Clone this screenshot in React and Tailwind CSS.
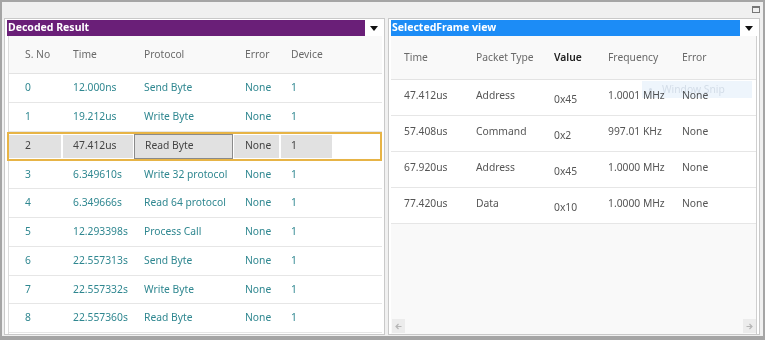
import React from 'react';

const decoded = [
  { no: '0', time: '12.000ns', protocol: 'Send Byte' },
  { no: '1', time: '19.212us', protocol: 'Write Byte' },
  { no: '2', time: '47.412us', protocol: 'Read Byte', selected: true },
  { no: '3', time: '6.349610s', protocol: 'Write 32 protocol' },
  { no: '4', time: '6.349666s', protocol: 'Read 64 protocol' },
  { no: '5', time: '12.293398s', protocol: 'Process Call' },
  { no: '6', time: '22.557313s', protocol: 'Send Byte' },
  { no: '7', time: '22.557332s', protocol: 'Write Byte' },
  { no: '8', time: '22.557360s', protocol: 'Read Byte' },
];

const frames = [
  { time: '47.412us', type: 'Address', value: '0x45', freq: '1.0001 MHz' },
  { time: '57.408us', type: 'Command', value: '0x2', freq: '997.01 KHz' },
  { time: '67.920us', type: 'Address', value: '0x45', freq: '1.0000 MHz' },
  { time: '77.420us', type: 'Data', value: '0x10', freq: '1.0000 MHz' },
];

function Caret() {
  return (
    <svg width="8" height="5" viewBox="0 0 8 5">
      <path d="M0 0h8L4 5z" fill="#111" />
    </svg>
  );
}

function ArrowBtn({ dir }) {
  return (
    <div className="flex h-[14px] w-[13px] items-center justify-center bg-[#ececec]">
      <svg width="7" height="7" viewBox="0 0 7 7">
        {dir === 'left' ? (
          <path d="M6.5 3.5H1M3.5 1L1 3.5 3.5 6" stroke="#b5b5b5" strokeWidth="1.2" fill="none" />
        ) : (
          <path d="M0.5 3.5H6M3.5 1L6 3.5 3.5 6" stroke="#b5b5b5" strokeWidth="1.2" fill="none" />
        )}
      </svg>
    </div>
  );
}

function PanelHeader({ title, color }) {
  return (
    <div className="flex h-[16px] items-center">
      <div className={`flex h-full flex-1 items-center pl-[1px] text-[10.5px] font-bold text-white ${color}`}>{title}</div>
      <div className="flex w-[17px] justify-center"><Caret /></div>
    </div>
  );
}

export default function App() {
  return (
    <div className="relative flex h-[340px] w-[765px] flex-col border-2 border-b-[4px] border-[#a5a5a5] bg-[#f0f0f0] text-[10.3px]" style={{ fontFamily: '"Noto Sans", "Open Sans", sans-serif' }}>
      <div className="flex h-[16px] justify-end pr-[3px] pt-[4px]">
        <div className="h-[7px] w-[8px] border border-t-2 border-[#777]" />
      </div>

      <div className="flex flex-1 gap-[3px] pb-[1px] pl-[2px] pr-[3px]">
        {/* Decoded result */}
        <div className="flex w-[381px] flex-col border border-[#c9c9c9] bg-white px-[2px] pt-[1px]">
          <PanelHeader title="Decoded Result" color="bg-[#6a1f78]" />
          <div className="ml-[1px] flex-1 border-l border-[#dcdcdc]">
            <div className="flex h-[38px] items-center border-b border-[#e3e3e3] bg-[#f9f9f9] text-[#6a6a6a]">
              <div className="w-[52px] pl-[16px]">S. No</div>
              <div className="w-[72px] pl-[12px]">Time</div>
              <div className="w-[100px] pl-[11px]">Protocol</div>
              <div className="w-[46px] pl-[12px]">Error</div>
              <div className="w-[53px] pl-[12px]">Device</div>
            </div>
            {decoded.map((r) =>
              r.selected ? (
                <div key={r.no} className="-ml-[2px] flex h-[29px] items-stretch border-2 border-[#e7b446] bg-white text-[#444]">
                  <div className="my-[1px] flex w-[52px] items-center bg-[#e1e1e1] pl-[16px]">{r.no}</div>
                  <div className="my-[1px] ml-[2px] flex w-[70px] items-center bg-[#e1e1e1] pl-[10px]">{r.time}</div>
                  <div className="ml-[1px] flex w-[99px] items-center border border-[#8a8a8a] bg-[#e1e1e1] pl-[10px]">{r.protocol}</div>
                  <div className="my-[1px] ml-[1px] flex w-[45px] items-center bg-[#e1e1e1] pl-[11px]">None</div>
                  <div className="my-[1px] ml-[2px] flex w-[51px] items-center bg-[#e1e1e1] pl-[10px]">1</div>
                </div>
              ) : (
                <div key={r.no} className="flex h-[28.75px] items-center border-b border-[#e6e6e6] text-[#2f8790]">
                  <div className="w-[52px] pl-[16px]">{r.no}</div>
                  <div className="w-[72px] pl-[12px]">{r.time}</div>
                  <div className="w-[100px] pl-[11px]">{r.protocol}</div>
                  <div className="w-[46px] pl-[12px]">None</div>
                  <div className="w-[53px] pl-[12px]">1</div>
                </div>
              )
            )}
          </div>
        </div>

        {/* Selected frame view */}
        <div className="flex flex-1 flex-col border border-[#c9c9c9] bg-white px-[2px] pt-[1px]">
          <PanelHeader title="SelectedFrame view" color="bg-[#1c8cf6]" />
          <div className="relative flex flex-1 flex-col border-r border-[#cfcfcf] bg-[#f9f9f9]">
            <div className="flex h-[44px] items-center border-b border-[#e3e3e3] text-[#6a6a6a]">
              <div className="w-[85px] pl-[13px]">Time</div>
              <div className="w-[78px]">Packet Type</div>
              <div className="w-[54px] font-semibold text-[#222]">Value</div>
              <div className="w-[74px]">Frequency</div>
              <div>Error</div>
            </div>
            {frames.map((f) => (
              <div key={f.time} className="flex h-[36px] items-start border-b border-[#e6e6e6] bg-white text-[#555]">
                <div className="w-[85px] pl-[13px] pt-[8px]">{f.time}</div>
                <div className="w-[78px] pt-[8px]">{f.type}</div>
                <div className="w-[54px] pt-[12px]">{f.value}</div>
                <div className="w-[74px] pt-[8px]">{f.freq}</div>
                <div className="pt-[8px]">None</div>
              </div>
            ))}
            <div className="flex-1" />
            <div className="flex justify-between pb-[1px] pl-[1px]">
              <ArrowBtn dir="left" />
              <ArrowBtn dir="right" />
            </div>
            <div className="absolute left-[251px] top-[45px] flex h-[17px] w-[110px] items-center gap-[10px] bg-[#eef5fc] pl-[7px] text-[#d3dde8] mix-blend-multiply">
              <span className="h-[3px] w-[3px] rounded-full bg-[#d3dde8]" />
              <span>Window Snip</span>
            </div>
          </div>
        </div>
      </div>
    </div>
  );
}
